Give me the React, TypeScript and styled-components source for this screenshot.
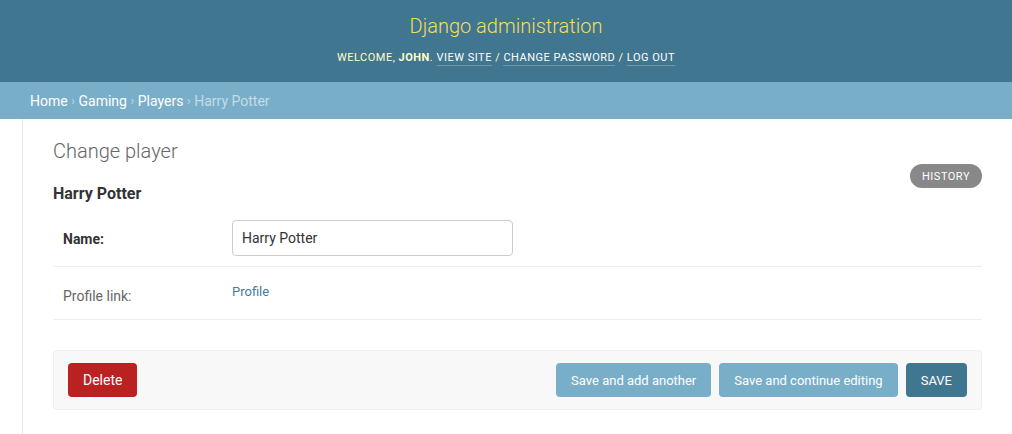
import React from "react";
import styled, { createGlobalStyle } from "styled-components";

const Global = createGlobalStyle`
  html, body { margin: 0; padding: 0; background: #fff; }
  body { font-family: Roboto, "Liberation Sans", Arial, sans-serif; color: #333; font-size: 14px; }
  * { box-sizing: border-box; }
`;

const Header = styled.header`
  height: 82px;
  background: #417690;
  display: flex;
  flex-direction: column;
  align-items: center;
  padding-top: 14px;
`;

const Branding = styled.h1`
  margin: 0;
  font-size: 20px;
  font-weight: 300;
  line-height: 24px;
  color: #f5dd5d;
`;

const UserTools = styled.div`
  margin-top: 12px;
  font-size: 11px;
  letter-spacing: 0.5px;
  text-transform: uppercase;
  color: #ffc;
  line-height: 16px;
  strong { font-weight: 700; }
`;

const ToolLink = styled.a`
  color: #fff;
  text-decoration: none;
  border-bottom: 1px solid rgba(255, 255, 255, 0.25);
  padding-bottom: 1px;
`;

const Breadcrumbs = styled.nav`
  height: 37px;
  background: #79aec8;
  padding: 0 30px;
  display: flex;
  align-items: center;
  font-size: 14px;
  color: #c4dce8;
`;

const Crumb = styled.a`
  color: #fff;
  text-decoration: none;
`;

const Sep = styled.span`
  margin: 0 3.6px;
  font-size: 12px;
`;

const Main = styled.div`
  display: flex;
  min-height: 315px;
`;

const SideBar = styled.div`
  width: 23px;
  flex: none;
  border-right: 1px solid #eaeaea;
`;

const Content = styled.main`
  flex: 1;
  padding: 20px 30px 20px 30px;
`;

const TitleArea = styled.div`
  display: flex;
  justify-content: space-between;
  align-items: flex-start;
`;

const Titles = styled.div`
  display: flex;
  flex-direction: column;
`;

const PageTitle = styled.h1`
  margin: 0;
  font-size: 20px;
  font-weight: 300;
  line-height: 24px;
  color: #666;
`;

const SubTitle = styled.h2`
  margin: 21px 0 0;
  font-size: 16px;
  font-weight: 700;
  line-height: 20px;
  color: #333;
`;

const HistoryButton = styled.a`
  margin-top: 25px;
  height: 24px;
  display: flex;
  align-items: center;
  padding: 0 12px;
  border-radius: 12px;
  background: #888;
  color: #fff;
  font-size: 11px;
  letter-spacing: 0.5px;
  text-transform: uppercase;
  text-decoration: none;
`;

const Fieldset = styled.div`
  margin-top: 6px;
  display: flex;
  flex-direction: column;
`;

const FormRow = styled.div<{ $h: number }>`
  display: flex;
  align-items: center;
  height: ${(p) => p.$h}px;
  padding: 0 10px;
  border-bottom: 1px solid #eee;
`;

const Label = styled.label<{ $required?: boolean }>`
  width: 170px;
  flex: none;
  font-size: 14px;
  font-weight: ${(p) => (p.$required ? 700 : 400)};
  color: ${(p) => (p.$required ? "#333" : "#666")};
  padding-top: ${(p) => (p.$required ? 1 : 5)}px;
`;

const Input = styled.input`
  width: 281px;
  height: 36px;
  margin-left: -1px;
  padding: 0 9px;
  border: 1px solid #ccc;
  border-radius: 4px;
  font-family: inherit;
  font-size: 14px;
  color: #333;
  outline: none;
`;

const ReadOnly = styled.a`
  margin-left: -1px;
  font-size: 13px;
  color: #447e9b;
  text-decoration: none;
  padding-bottom: 3px;
`;

const SubmitRow = styled.div`
  margin-top: 30px;
  height: 60px;
  display: flex;
  align-items: center;
  gap: 8px;
  padding: 0 14px;
  background: #f8f8f8;
  border: 1px solid #eee;
  border-radius: 4px;
`;

const Button = styled.button<{ $kind: "delete" | "light" | "primary" }>`
  height: 34px;
  padding: 0 15px;
  border: none;
  border-radius: 4px;
  font-family: inherit;
  font-size: ${(p) => (p.$kind === "delete" ? 14 : 13)}px;
  color: #fff;
  background: ${(p) =>
    p.$kind === "delete" ? "#ba2121" : p.$kind === "primary" ? "#417690" : "#79aec8"};
  margin-right: ${(p) => (p.$kind === "delete" ? "auto" : "0")};
  cursor: pointer;
`;

export default function App() {
  return (
    <>
      <Global />
      <Header>
        <Branding>Django administration</Branding>
        <UserTools>
          Welcome, <strong>John</strong>. <ToolLink href="#">View site</ToolLink> /{" "}
          <ToolLink href="#">Change password</ToolLink> / <ToolLink href="#">Log out</ToolLink>
        </UserTools>
      </Header>
      <Breadcrumbs>
        <Crumb href="#">Home</Crumb>
        <Sep>›</Sep>
        <Crumb href="#">Gaming</Crumb>
        <Sep>›</Sep>
        <Crumb href="#">Players</Crumb>
        <Sep>›</Sep>
        <span>Harry Potter</span>
      </Breadcrumbs>
      <Main>
        <SideBar />
        <Content>
          <TitleArea>
            <Titles>
              <PageTitle>Change player</PageTitle>
              <SubTitle>Harry Potter</SubTitle>
            </Titles>
            <HistoryButton href="#">History</HistoryButton>
          </TitleArea>
          <Fieldset>
            <FormRow $h={57}>
              <Label $required>Name:</Label>
              <Input defaultValue="Harry Potter" />
            </FormRow>
            <FormRow $h={53}>
              <Label>Profile link:</Label>
              <ReadOnly href="#">Profile</ReadOnly>
            </FormRow>
          </Fieldset>
          <SubmitRow>
            <Button $kind="delete">Delete</Button>
            <Button $kind="light">Save and add another</Button>
            <Button $kind="light">Save and continue editing</Button>
            <Button $kind="primary">SAVE</Button>
          </SubmitRow>
        </Content>
      </Main>
    </>
  );
}
